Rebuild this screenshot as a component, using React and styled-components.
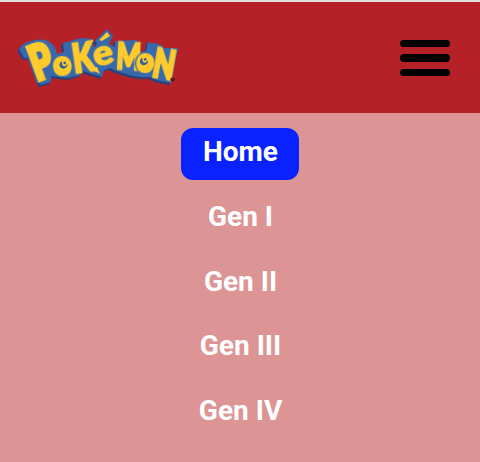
import React from "react";
import styled, { createGlobalStyle } from "styled-components";

const GlobalStyle = createGlobalStyle`
  * { box-sizing: border-box; }
  body { margin: 0; background: #dc9494; font-family: Roboto, sans-serif; }
`;

const Page = styled.div`
  display: flex;
  flex-direction: column;
  height: 462px;
  overflow: hidden;
  background: #dc9494;
  border-top: 2px solid #e2dfdf;
`;

const Header = styled.header`
  display: flex;
  flex: none;
  justify-content: space-between;
  align-items: flex-start;
  height: 111px;
  padding: 18px 30px 0 10px;
  background: #b52126;
`;

const Logo = styled.svg`
  display: block;
  width: 180px;
  height: 75px;
  overflow: visible;
`;

const Glyph = styled.text`
  font-family: Lato, sans-serif;
  font-weight: 900;
  font-size: 24px;
  text-anchor: middle;
  filter: drop-shadow(0.8px 0 0 #3769ac) drop-shadow(-0.8px 0 0 #3769ac);
`;

const MenuButton = styled.button`
  display: flex;
  flex-direction: column;
  gap: 7px;
  margin: 20px 0 0;
  padding: 0;
  border: 0;
  background: none;
`;

const Bar = styled.span`
  width: 50px;
  height: 7.4px;
  border-radius: 4px;
  background: #000;
`;

const Nav = styled.nav`
  display: flex;
  flex-direction: column;
  align-items: center;
  gap: 12.75px;
  padding-top: 15px;
`;

const NavLink = styled.a`
  flex: none;
  height: 52px;
  padding: 7px 21.5px 0 22.5px;
  border-radius: 12px;
  background: ${({ $active }) => ($active ? "#0a22ff" : "transparent")};
  color: #fff;
  font-size: 28px;
  line-height: 33px;
  font-weight: 700;
  text-decoration: none;
`;

const letters = [
  { ch: "P", x: 37, y: 57.5, r: -20, sx: 1.45, sy: 1.95, w: 2 },
  { ch: "K", x: 75, y: 51.5, r: -8, sx: 1.3, sy: 1.7, w: 1.5 },
  { ch: "o", x: 53.5, y: 55, r: -8, sx: 1.35, sy: 1.4, w: 1.3 },
  { ch: "e", x: 95.5, y: 44.5, r: -14, sx: 1.55, sy: 1.45, w: 1 },
  { ch: "M", x: 118, y: 49, r: 3, sx: 1.06, sy: 1.48, w: 1.9 },
  { ch: "N", x: 152, y: 58, r: 10, sx: 1.15, sy: 1.7, w: 1.9 },
  { ch: "o", x: 134, y: 52, r: 8, sx: 1.3, sy: 1.4, w: 1.3 },
];

const silhouette =
  "M9 29 13 24Q29 17 38 21 46 25 47 34L54 32 53 23 71 18 82 19 84 28 87 24 85 21 97 9 103 16 99 24 105 27 105 21 127 20 129 32 136 31 138 22 152 25 154 28 168 28 161 63 146 60 140 57 131 57 123 56 106 51 100 48 94 50 92 57 73 51 70 55 58 58 41 56 41 62 30 65 20 37 14 38Z";

function Eye({ x, y }) {
  return (
    <g transform={`translate(${x} ${y})`}>
      <circle r="6.2" fill="#ffca2c" />
      <path
        d="M-1.5 -4.6Q-5.2 -2 -3.6 1.2 -1.4 4.3 2 2.6 4.5 1 4 -2 2.6 .8 .4 .7 -2 .2 -1.5 -4.6Z"
        fill="#315f9e"
      />
      <circle cx="1.2" cy="-2.6" r="1.3" fill="#315f9e" />
    </g>
  );
}

function LogoMark() {
  return (
    <Logo viewBox="0 0 180 75" role="img" aria-label="Pokémon">
      <path d={silhouette} transform="translate(-1.5 1.8)" fill="#26437f" stroke="#26437f" strokeWidth="0.5" strokeLinejoin="round" />
      <path d={silhouette} fill="#3769ac" />
      {letters.map(({ ch, x, y, r, sx, sy, w }) => (
        <Glyph
          key={`${ch}-${x}`}
          fill="#ffca2c"
          stroke="#ffca2c"
          strokeWidth={w}
          transform={`translate(${x} ${y}) rotate(${r}) scale(${sx} ${sy})`}
        >
          {ch}
        </Glyph>
      ))}
      <path d="M15 27 23 23 26 33 20 34Z" fill="#ffca2c" />
      <path d="M81 49 87 47 90 54Z" fill="#ffca2c" />
      <path d="M89 20 97 12 100 16 92 21Z" fill="#ffca2c" />
      <Eye x={53.5} y={45.5} />
      <Eye x={134} y={42} />
      <circle cx="162.5" cy="59.5" r="2.1" fill="#421a20" />
      <circle cx="162.5" cy="59.5" r="0.8" fill="#8b2428" />
    </Logo>
  );
}

const links = ["Home", "Gen I", "Gen II", "Gen III", "Gen IV"];

export default function App() {
  return (
    <>
      <GlobalStyle />
      <Page>
        <Header>
          <LogoMark />
          <MenuButton aria-label="Menu">
            <Bar />
            <Bar />
            <Bar />
          </MenuButton>
        </Header>
        <Nav>
          {links.map((label) => (
            <NavLink key={label} $active={label === "Home"}>
              {label}
            </NavLink>
          ))}
        </Nav>
      </Page>
    </>
  );
}
